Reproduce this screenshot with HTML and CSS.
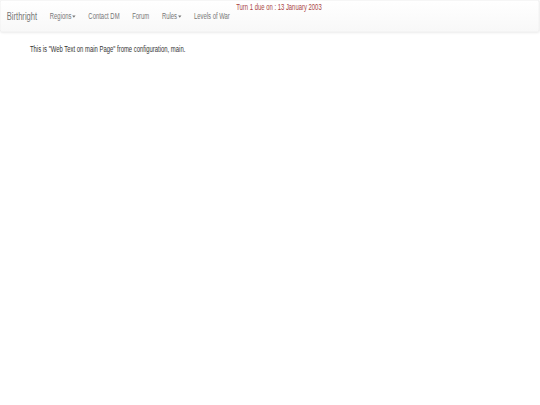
FILE: index.html
```html
<!DOCTYPE html>
<html>
<head>
<meta charset="utf-8">
<link rel="stylesheet" href="styles.css">
</head>
<body>
<div class="viewport">
  <div class="page">
    <nav class="navbar">
      <a class="brand" href="#">Birthright</a>
      <ul class="nav">
        <li><a href="#">Regions<span class="caret"></span></a></li>
        <li><a href="#">Contact DM</a></li>
        <li><a href="#">Forum</a></li>
        <li><a href="#">Rules<span class="caret"></span></a></li>
        <li><a href="#">Levels of War</a></li>
      </ul>
      <div class="turn">Turn 1 due on : 13 January 2003</div>
    </nav>
    <main class="content">
      <p class="intro">This is "Web Text on main Page" frome configuration, main.</p>
    </main>
  </div>
</div>
</body>
</html>
```
FILE: styles.css
```css
html, body {
  margin: 0;
  padding: 0;
  background: #fff;
  overflow: hidden;
}
body {
  font-family: "Liberation Sans", Arial, sans-serif;
  color: #333;
  font-size: 14px;
  line-height: 20px;
}
.viewport {
  width: 540px;
  height: 405px;
  overflow: hidden;
}
.page {
  width: 1278px;
  height: 600px;
  transform: scale(0.422, 0.615);
  transform-origin: 0 0;
}
.navbar {
  display: flex;
  align-items: flex-start;
  box-sizing: border-box;
  min-height: 52px;
  margin-bottom: 17px;
  border: 1px solid #e7e7e7;
  border-radius: 4px;
  background: linear-gradient(to bottom, #ffffff 0%, #f8f8f8 100%);
  box-shadow: inset 0 1px 0 rgba(255,255,255,.15), 0 1px 5px rgba(0,0,0,.075);
}
.brand {
  color: #777;
  text-decoration: none;
  font-size: 18px;
  line-height: 20px;
  padding: 15px;
}
.nav {
  display: flex;
  list-style: none;
  margin: 0;
  padding: 0;
}
.nav a {
  display: block;
  color: #777;
  text-decoration: none;
  text-shadow: 0 1px 0 rgba(255,255,255,.25);
  line-height: 20px;
  padding: 15px;
}
.caret {
  display: inline-block;
  width: 0;
  height: 0;
  margin-left: 2px;
  vertical-align: middle;
  border-top: 4px solid #777;
  border-left: 4px solid transparent;
  border-right: 4px solid transparent;
}
.turn {
  color: #a94442;
  line-height: 20px;
}
.content {
  padding: 0 71px;
}
.intro {
  margin: 0;
}
```
